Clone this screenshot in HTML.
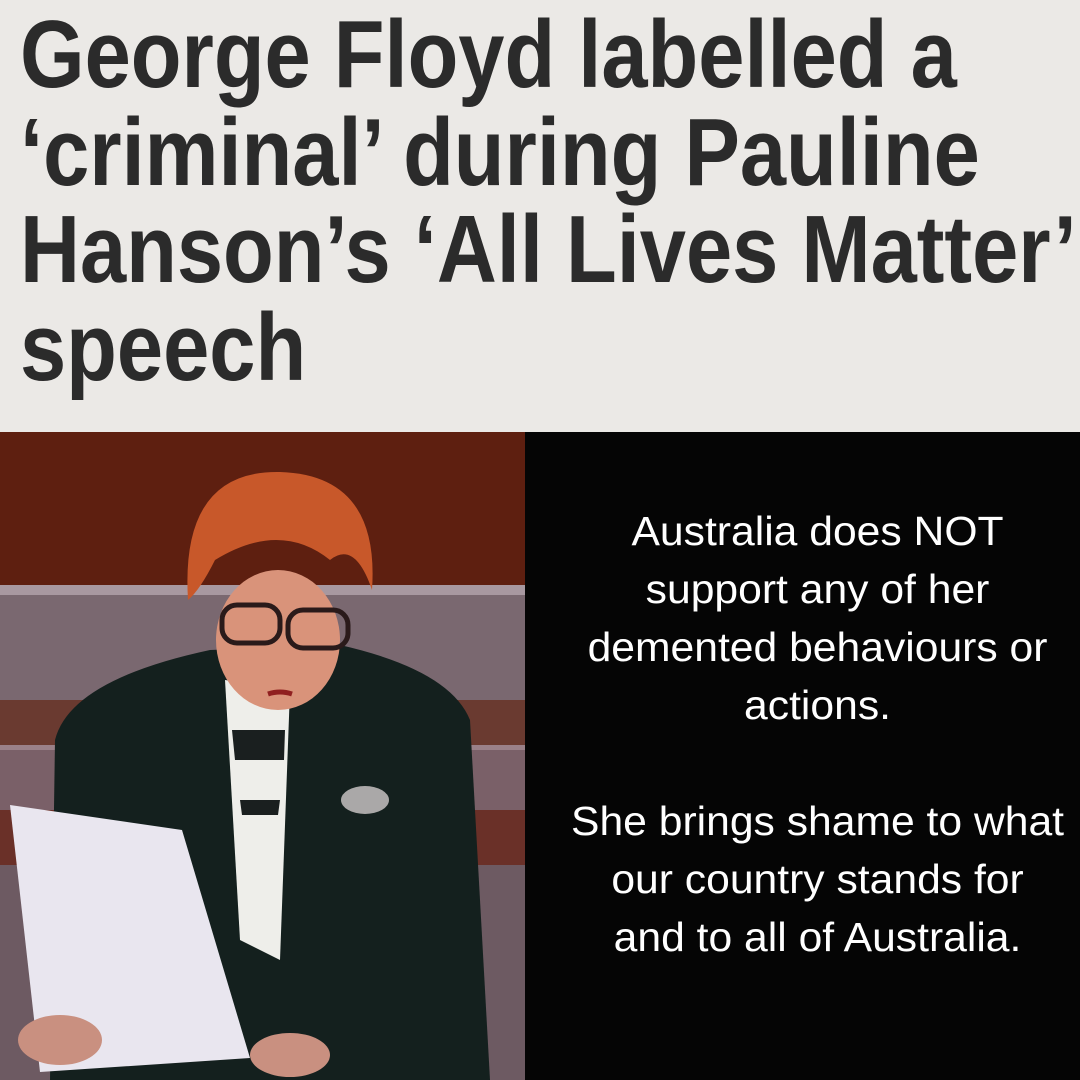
<!DOCTYPE html>
<html><head><meta charset="utf-8"><style>
html,body{margin:0;padding:0}
body{width:1080px;height:1080px;overflow:hidden;position:relative;background:#000}
#top{position:absolute;left:0;top:0;width:1080px;height:432px;background:#ebe9e6}
#top h1{margin:0;position:absolute;left:20px;top:6px;font-family:"Liberation Sans Narrow","Liberation Sans",sans-serif;font-weight:bold;font-size:96px;line-height:97.5px;color:#2b2b2b;transform:scaleX(0.865);transform-origin:0 0;white-space:nowrap}
#photo{position:absolute;left:0;top:432px;width:525px;height:648px}
#txt{position:absolute;left:525px;top:432px;width:555px;height:648px;background:#050505;color:#fff;font-family:"Liberation Sans",sans-serif;font-size:41px;line-height:58px;text-align:center;overflow:hidden}
#txt div{position:absolute;top:70px;left:-100px;width:785px;white-space:nowrap;transform:scaleX(1.04);transform-origin:392px 0}
</style></head><body>
<div id="top"><h1>George Floyd labelled a<br>‘criminal’ during Pauline<br>Hanson’s ‘All Lives Matter’<br>speech</h1></div>
<svg id="photo" viewBox="0 432 525 648" width="525" height="648">
<rect x="0" y="432" width="525" height="648" fill="#6a2a1a"/>
<rect x="0" y="432" width="525" height="155" fill="#5e1f10"/>
<rect x="0" y="585" width="525" height="10" fill="#a898a0"/>
<rect x="0" y="595" width="525" height="105" fill="#7a6870"/>
<rect x="0" y="700" width="525" height="70" fill="#6a3a30"/>
<rect x="0" y="745" width="525" height="8" fill="#9a8088"/>
<rect x="0" y="750" width="525" height="60" fill="#7a6068"/>
<rect x="0" y="810" width="525" height="60" fill="#6a3028"/>
<rect x="0" y="865" width="525" height="215" fill="#6d5a62"/>
<path d="M50 1080 L55 740 Q70 680 210 650 L340 645 Q450 670 470 720 L490 1080 Z" fill="#14201e"/>
<path d="M225 680 L290 690 L280 960 L240 940 Z" fill="#eeeeea"/>
<path d="M232 730 L285 730 L284 760 L235 760 Z M240 800 L280 800 L278 815 L242 815Z" fill="#1a1f1f"/>
<ellipse cx="278" cy="640" rx="62" ry="70" fill="#d9937a"/>
<path d="M188 600 Q180 470 280 472 Q380 475 372 590 Q355 540 330 560 Q280 520 215 560 Q200 590 188 600Z" fill="#c8582a"/>
<rect x="222" y="605" width="58" height="38" rx="15" fill="none" stroke="#2a1a1a" stroke-width="5"/>
<rect x="288" y="610" width="60" height="38" rx="15" fill="none" stroke="#2a1a1a" stroke-width="5"/>
<path d="M268 694 Q280 690 292 694" stroke="#902020" stroke-width="5" fill="none"/>
<ellipse cx="365" cy="800" rx="24" ry="14" fill="#aaa8a8"/>
<path d="M10 805 L182 830 L250 1058 L40 1072 Z" fill="#e9e6ef"/>
<ellipse cx="60" cy="1040" rx="42" ry="25" fill="#c99080"/>
<ellipse cx="290" cy="1055" rx="40" ry="22" fill="#c99080"/>
</svg>
<div id="txt"><div>Australia does NOT<br>support any of her<br>demented behaviours or<br>actions.<br><br>She brings shame to what<br>our country stands for<br>and to all of Australia.</div></div>
</body></html>
